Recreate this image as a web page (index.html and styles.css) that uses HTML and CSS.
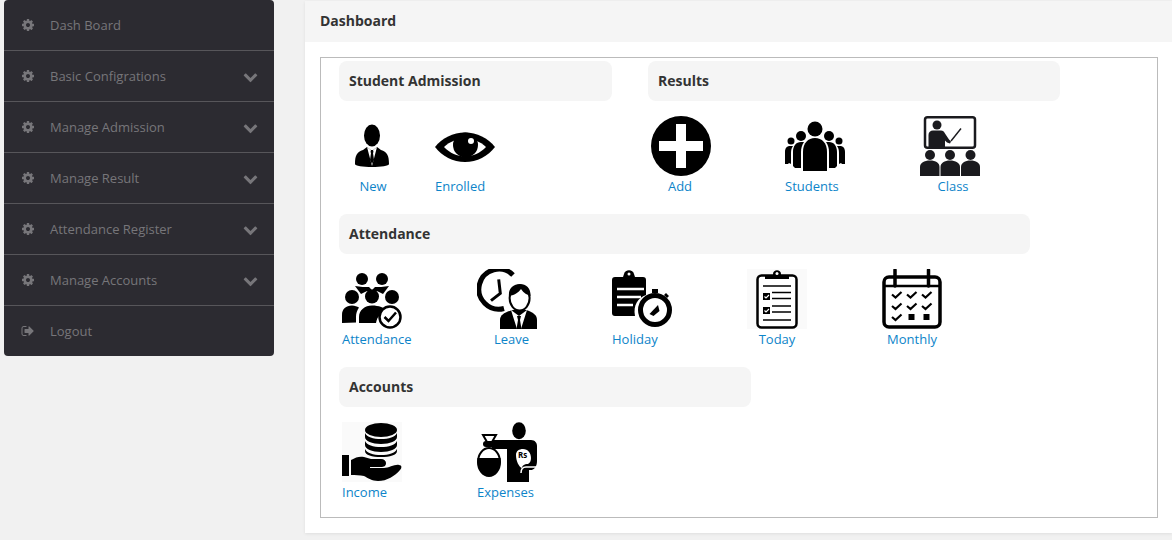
FILE: index.html
```html
<!DOCTYPE html>
<html lang="en">
<head>
    <meta charset="UTF-8">
    <title>Dashboard</title>
    <link rel="stylesheet" href="styles.css">
</head>
<body>
<svg class="sprite" xmlns="http://www.w3.org/2000/svg">
    <symbol id="cog" viewBox="0 0 1792 1792"><path d="M1152 896q0-106-75-181t-181-75-181 75-75 181 75 181 181 75 181-75 75-181zm512-109v222q0 12-8 23t-20 13l-185 28q-19 54-39 91 35 50 107 138 10 12 10 25t-9 23q-27 37-99 108t-94 71q-12 0-26-9l-138-108q-44 23-91 38-16 136-29 186-7 28-36 28h-222q-14 0-24.5-8.5t-11.5-21.5l-28-184q-49-16-90-37l-141 107q-10 9-25 9-14 0-25-11-126-114-165-168-7-10-7-23 0-12 8-23 15-21 51-66.5t54-70.5q-27-50-41-99l-183-27q-13-2-21-12.5t-8-23.5v-222q0-12 8-23t19-13l186-28q14-46 39-92-40-57-107-138-10-12-10-24 0-10 9-23 26-36 98.5-107.5t94.5-71.5q13 0 26 10l138 107q44-23 91-38 16-136 29-186 7-28 36-28h222q14 0 24.5 8.5t11.5 21.5l28 184q49 16 90 37l142-107q9-9 24-9 13 0 25 10 129 119 165 170 7 8 7 22 0 12-8 23-15 21-51 66.5t-54 70.5q26 50 41 98l183 28q13 2 21 12.5t8 23.5z"/></symbol>
    <symbol id="chevron" viewBox="0 0 1792 1792"><path d="M1683 808l-742 741q-19 19-45 19t-45-19l-742-741q-19-19-19-45.5t19-45.5l166-166q19-19 45-19t45 19l531 531 531-531q19-19 45-19t45 19l166 166q19 19 19 45.5t-19 45.5z"/></symbol>
    <symbol id="sign-out" viewBox="0 0 1792 1792"><path d="M704 1440q0 4 1 20t.5 26.5-3 23.5-10 19.5-20.5 6.5h-320q-119 0-203.5-84.5t-84.5-203.5v-704q0-119 84.5-203.5t203.5-84.5h320q13 0 22.5 9.5t9.5 22.5q0 4 1 20t.5 26.5-3 23.5-10 19.5-20.5 6.5h-320q-66 0-113 47t-47 113v704q0 66 47 113t113 47h312l11.5 1 11.5 3 8 5.5 7 9 2 13.5zm928-544q0 26-19 45l-544 544q-19 19-45 19t-45-19-19-45v-288h-448q-26 0-45-19t-19-45v-384q0-26 19-45t45-19h448v-288q0-26 19-45t45-19 45 19l544 544q19 19 19 45z"/></symbol>
</svg>

<aside class="sidebar">
    <ul class="side-menu">
        <li><a href="#"><svg class="side-icon"><use href="#cog"/></svg><span>Dash Board</span></a></li>
        <li><a href="#"><svg class="side-icon"><use href="#cog"/></svg><span>Basic Configrations</span><svg class="side-arrow"><use href="#chevron"/></svg></a></li>
        <li><a href="#"><svg class="side-icon"><use href="#cog"/></svg><span>Manage Admission</span><svg class="side-arrow"><use href="#chevron"/></svg></a></li>
        <li><a href="#"><svg class="side-icon"><use href="#cog"/></svg><span>Manage Result</span><svg class="side-arrow"><use href="#chevron"/></svg></a></li>
        <li><a href="#"><svg class="side-icon"><use href="#cog"/></svg><span>Attendance Register</span><svg class="side-arrow"><use href="#chevron"/></svg></a></li>
        <li><a href="#"><svg class="side-icon"><use href="#cog"/></svg><span>Manage Accounts</span><svg class="side-arrow"><use href="#chevron"/></svg></a></li>
        <li><a href="#"><svg class="side-icon"><use href="#sign-out"/></svg><span>Logout</span></a></li>
    </ul>
</aside>

<main class="panel">
    <div class="panel-title">Dashboard</div>
    <div class="panel-body">
        <div class="frame">
            <div class="top-row">
                <section class="group-admission">
                    <h3>Student Admission</h3>
                    <div class="tiles tiles-tight">
                        <a class="tile tile-center" href="#">
                            <svg viewBox="0 0 60 60">
                                <ellipse cx="29" cy="19.500" rx="8" ry="11"/>
                                <path d="M12 48c0-9 2-12 8-14l4-3 5 4 5-4 4 3c6 2 8 5 8 14 0 2-8 3-17 3s-17-1-17-3z"/>
                                <path d="M24 31l5 19 5-19-5 4z" fill="#fff"/>
                                <path d="M28 34h2l.5 2-.5 1 1 7-2 4-2-4 1-7-.5-1z"/>
                            </svg>
                            <span>New</span>
                        </a>
                        <a class="tile" href="#">
                            <svg viewBox="0 0 60 60">
                                <path d="M0 31C7 22 18 16.500 30 16.500S53 22 60 31c-7 9-18 15-30 15S7 40 0 31z"/>
                                <path d="M9 31c6-5.500 13-8.500 21-8.500s15 3 21 8.500c-6 6-13 9.500-21 9.500S15 37 9 31z" fill="#fff"/>
                                <circle cx="30.500" cy="29" r="12.500"/>
                                <circle cx="36" cy="25" r="3" fill="#fff"/>
                            </svg>
                            <span>Enrolled</span>
                        </a>
                    </div>
                </section>
                <section class="group-results">
                    <h3>Results</h3>
                    <div class="tiles tiles-results">
                        <a class="tile tile-center tile-add" href="#">
                            <svg viewBox="0 0 60 60">
                                <circle cx="30" cy="30" r="30"/>
                                <path d="M25 8h10v17h17v10H35v17H25V35H8V25h17z" fill="#fff"/>
                            </svg>
                            <span>Add</span>
                        </a>
                        <a class="tile" href="#">
                            <svg viewBox="0 0 60 60">
                                <circle cx="6" cy="25" r="3.500"/>
                                <circle cx="54" cy="25" r="3.500"/>
                                <path d="M0 48V36c0-4 2-6 5-6h3c-2 3-2 5-2 8v10l-2-1-1 1z"/>
                                <path d="M60 48V36c0-4-2-6-5-6h-3c2 3 2 5 2 8v10l2-1 1 1z"/>
                                <circle cx="16" cy="20" r="5"/>
                                <circle cx="44" cy="20" r="5"/>
                                <path d="M8 50V36c0-6 3-10 8-10h3c-2 3-3 6-3 10v16h-6z"/>
                                <path d="M52 50V36c0-6-3-10-8-10h-3c2 3 3 6 3 10v16h6z"/>
                                <circle cx="30" cy="13" r="7.500"/>
                                <path d="M18 55V36c0-9 5-14 12-14s12 5 12 14v19z"/>
                            </svg>
                            <span>Students</span>
                        </a>
                        <a class="tile tile-center tile-class" href="#">
                            <svg viewBox="0 0 60 60">
                                <rect x="5" y="1.250" width="50" height="30.500" rx="2.500" fill="#fff" stroke="#1a1a1e" stroke-width="2.500"/>
                                <circle cx="17" cy="9" r="4.500" fill="#1a1a1e"/>
                                <path d="M8.500 32V19c0-3 2-4.500 4.500-4.500h8c2 0 3 1 4 3l4 6 2 2-1 2-3-1-2-2v7.500z" fill="#1a1a1e"/>
                                <path d="M31 25l10-12.500" stroke="#1a1a1e" stroke-width="1.400" fill="none"/>
                                <circle cx="10" cy="39" r="5" fill="#1a1a1e"/>
                                <circle cx="30" cy="39" r="5" fill="#1a1a1e"/>
                                <circle cx="50.500" cy="39" r="5" fill="#1a1a1e"/>
                                <path d="M0 60V51c0-4 4-6.500 10-6.500s9.500 2.500 9.500 6.500v9z" fill="#1a1a1e"/>
                                <path d="M20.500 60V51c0-4 4-6.500 9.500-6.500s10 2.500 10 6.500v9z" fill="#1a1a1e"/>
                                <path d="M41 60V51c0-4 4-6.500 9.500-6.500S60 47 60 51v9z" fill="#1a1a1e"/>
                            </svg>
                            <span>Class</span>
                        </a>
                    </div>
                </section>
            </div>

            <section class="group-attendance">
                <h3>Attendance</h3>
                <div class="tiles">
                    <a class="tile" href="#">
                        <svg viewBox="0 0 60 60">
                            <circle cx="20" cy="10" r="6"/>
                            <circle cx="40" cy="10" r="6"/>
                            <path d="M13 17c5 1 11 1 14 1l3 3 3-3c3 0 9 0 14-1l-6 8-6-3-5 3-5-3-6 3z"/>
                            <circle cx="10" cy="28" r="7"/>
                            <circle cx="30" cy="27.500" r="7"/>
                            <circle cx="50" cy="28" r="7"/>
                            <path d="M0 54V46c0-6 4-9.500 10-9.500 3 0 5 1 7 2-2 3-3 6-3 9v6z"/>
                            <path d="M17 54v-6c0-7 6-11.500 13-11.500 7 0 12 2 16 6-7 1-11 5-12 11.500z"/>
                            <circle cx="48" cy="48" r="10.500" fill="#fff" stroke="#000" stroke-width="2.500"/>
                            <path d="M42.500 48l4 4 7.500-8.500" fill="none" stroke="#000" stroke-width="2.500"/>
                        </svg>
                        <span>Attendance</span>
                    </a>
                    <a class="tile tile-center tile-leave" href="#">
                        <svg viewBox="0 0 60 60">
                            <path d="M36 6A20 20 0 1 0 27 39.500" fill="none" stroke="#000" stroke-width="5"/>
                            <path d="M21.700 10.300L23.300 24.300 14 31.700" fill="none" stroke="#000" stroke-width="3"/>
                            <path d="M23 60V51c0-5 5-8 13-10h13c7 2 11 5 11 10v9z"/>
                            <path d="M34 41l8 6 8-6-6 19h-4z" fill="#fff"/>
                            <path d="M40 47h4l-1 4 1.500 9h-5l1.500-9z"/>
                            <ellipse cx="42.600" cy="29" rx="10" ry="12.500" fill="#fff" stroke="#000" stroke-width="2"/>
                            <path d="M32 27c-1-8 5-12 11-12s11 4 10.500 12c-3-1-7-3-9.500-7-2 3-6 6-12 7z"/>
                        </svg>
                        <span>Leave</span>
                    </a>
                    <a class="tile" href="#">
                        <svg viewBox="0 0 60 60">
                            <path d="M3 8h8l1-3c1-5 9-5 10 0l1 3h8c2 0 3 1 3 3v15c-8 3-13 10-11 21H3c-2 0-3-1-3-3V11c0-2 1-3 3-3z"/>
                            <path d="M5 20h27M5 28h24M5 36h16" stroke="#fff" stroke-width="2.500"/>
                            <circle cx="17" cy="5" r="1.500" fill="#fff"/>
                            <circle cx="43" cy="41" r="14.500" fill="#fff" stroke="#000" stroke-width="5"/>
                            <path d="M40 20h6v4h-6zM54 24l3 3-2 2-3-3z"/>
                            <path d="M37.500 45l8.500-9 1.500 6-6 5z"/>
                        </svg>
                        <span>Holiday</span>
                    </a>
                    <a class="tile tile-center" href="#">
                        <svg viewBox="0 0 60 60">
                            <rect width="60" height="60" fill="#fafafa"/>
                            <rect x="10.500" y="6.500" width="39" height="52" rx="4" fill="#fff" stroke="#000" stroke-width="2.500"/>
                            <path d="M18 10v-3h6c2 0 2-1 2-2 0-5 8-5 8 0 0 1 0 2 2 2h6v3z"/>
                            <circle cx="30" cy="4.500" r="1.500" fill="#fff"/>
                            <path d="M16 17h28M25 23.500h19M25 29.500h19M25 37h19M25 43h19M16 51h28" stroke="#000" stroke-width="1.500"/>
                            <rect x="16" y="24" width="7" height="7"/>
                            <rect x="16" y="38" width="7" height="7"/>
                            <path d="M17.500 27.500l1.500 1.500 3-3M17.500 41.500l1.500 1.500 3-3" fill="none" stroke="#fff" stroke-width="1.200"/>
                        </svg>
                        <span>Today</span>
                    </a>
                    <a class="tile tile-center" href="#">
                        <svg viewBox="0 0 60 60">
                            <rect x="2" y="8" width="56" height="50" rx="5" fill="#fff" stroke="#000" stroke-width="3.500"/>
                            <path d="M2 17h56" stroke="#000" stroke-width="2.500"/>
                            <path d="M13 1v16M46.500 1v16" stroke="#000" stroke-width="3.500" stroke-linecap="round"/>
                            <g fill="none" stroke="#000" stroke-width="2.200">
                                <path d="M10 25.500l3.500 3 6-5.500M25 25.500l3.500 3 6-5.500M40 25.500l3.500 3 6-5.500"/>
                                <path d="M10 37l3.500 3 6-5.500M25 37l3.500 3 6-5.500M40 37l3.500 3 6-5.500"/>
                                <path d="M10 48l3.500 3 6-5.500"/>
                            </g>
                            <rect x="26.500" y="45" width="6" height="6"/>
                            <rect x="41.500" y="45" width="6" height="6"/>
                        </svg>
                        <span>Monthly</span>
                    </a>
                </div>
            </section>

            <section class="group-accounts">
                <h3>Accounts</h3>
                <div class="tiles">
                    <a class="tile" href="#">
                        <svg viewBox="0 0 60 60">
                            <rect width="60" height="60" fill="#fafafa"/>
                            <ellipse cx="39" cy="8" rx="16" ry="7"/>
                            <path d="M23 11c2 4 8 6 16 6s14-2 16-6v4c0 4-7 7-16 7s-16-3-16-7z"/>
                            <path d="M23 19c2 4 8 6 16 6s14-2 16-6v4c0 4-7 7-16 7s-16-3-16-7z"/>
                            <path d="M23 27c2 4 8 6 16 6s14-2 16-6v2c0 4-7 6-16 6s-16-2-16-6z"/>
                            <rect y="33" width="7" height="21"/>
                            <path d="M9 38c5-3 9-4 13-3l7 2h10c3 0 5 2 5 4 0 3-2 4-5 4H28v1h14c5 0 11-4 15-3 3 0 3 3 1 5-5 6-13 11-22 11-6 0-10-3-14-5-4-1-9-1-13-1z"/>
                        </svg>
                        <span>Income</span>
                    </a>
                    <a class="tile" href="#">
                        <svg viewBox="0 0 60 60">
                            <ellipse cx="42" cy="8.700" rx="6.800" ry="8.500"/>
                            <path d="M15 18h39c4 0 6 3 6 6v15c0 6-3 9-8 10v11H30V27H15z"/>
                            <path d="M39 33c0-4 3-6 7-6 5 0 8 4 8 9 0 3-1 5-3 6-4 0-6 2-6 4-3-1-6-7-6-13z" fill="#fff"/>
                            <path d="M44 51c0-4 2-6 5-6h11" fill="none" stroke="#fff" stroke-width="1.500"/>
                            <path d="M52 48h8v12h-8z" fill="#fff"/>
                            <text class="rs" x="41" y="35.500">Rs</text>
                            <path d="M6 13h13l-4 7h-5z" fill="#fff" stroke="#000" stroke-width="2"/>
                            <rect x="6" y="19" width="13" height="6" rx="3"/>
                            <ellipse cx="12" cy="40" rx="11" ry="14" fill="#fff" stroke="#000" stroke-width="2"/>
                            <path d="M.5 36h23c1 10-5 18-11.500 18S-.5 46 .5 36z"/>
                        </svg>
                        <span>Expenses</span>
                    </a>
                </div>
            </section>
        </div>
    </div>
</main>
</body>
</html>
```

FILE: styles.css
```css
body {
    font-family: "Open Sans", sans-serif;
    font-size: 13px;
    margin: 0;
    padding: 0 0 0 4px;
    height: 540px;
    box-sizing: border-box;
    overflow: hidden;
    display: flex;
    align-items: flex-start;
    background-color: #f1f1f1;
}
a {
    text-decoration: none;
}
.sprite {
    display: none;
}

/* sidebar */
.sidebar {
    width: 270px;
    flex: none;
    background-color: #2c2b31;
    border-radius: 4px;
}
.side-menu {
    list-style: none;
    margin: 0;
    padding: 0;
}
.side-menu li + li {
    border-top: 1px solid #57565a;
}
.side-menu a {
    display: flex;
    align-items: center;
    height: 50px;
    padding: 0 16px 0 17px;
    color: #77767a;
}
.side-menu span {
    flex: 1;
}
.side-icon {
    width: 14px;
    height: 14px;
    margin-right: 15px;
    fill: #77767a;
}
.side-arrow {
    width: 15px;
    height: 15px;
    fill: #77767a;
}

/* main panel */
.panel {
    flex: 1;
    margin: 1px 0 0 31px;
    height: 532px;
    display: flex;
    flex-direction: column;
    background-color: #fff;
    box-shadow: 0 1px 3px rgba(0,0,0,0.08);
}
.panel-title {
    height: 41px;
    line-height: 39px;
    padding: 0 15px;
    font-size: 14px;
    font-weight: 700;
    color: #333;
    background-color: #f5f5f5;
}
.panel-body {
    flex: 1;
    padding: 15px 14px 15px 15px;
}
.frame {
    height: 461px;
    box-sizing: border-box;
    padding: 3px 18px;
    border: 1px solid #bbb;
}
h3 {
    height: 40px;
    line-height: 40px;
    margin: 0 0 15px;
    padding: 0 10px;
    font-size: 14px;
    font-weight: 700;
    color: #333;
    background-color: #f5f5f5;
    border-radius: 8px;
}
section {
    margin-bottom: 19px;
}
.top-row {
    display: flex;
    gap: 36px;
}
.group-admission {
    width: 273px;
}
.group-results {
    width: 412px;
}
.group-attendance {
    width: 691px;
}
.group-accounts {
    width: 412px;
}

/* icon tiles */
.tiles {
    display: flex;
    gap: 75px;
    padding-left: 3px;
}
.tiles-tight {
    gap: 32px;
    padding-left: 4px;
}
.tiles-results {
    gap: 74px;
}
.tile {
    width: 60px;
    display: flex;
    flex-direction: column;
    white-space: nowrap;
    color: #0d84c9;
}
.tile-center {
    align-items: center;
}
.tile svg {
    width: 60px;
    height: 60px;
    margin-bottom: 1px;
}
.tile span {
    line-height: 18px;
}
.tile-add span {
    margin-right: 2px;
}
.tile-class {
    margin-left: 1px;
}
.tile-class span {
    margin-left: 6px;
}
.tile-leave span {
    margin-left: 9px;
}
.rs {
    font-family: "Open Sans", sans-serif;
    font-size: 8px;
    font-weight: 700;
    fill: #000;
}
```
